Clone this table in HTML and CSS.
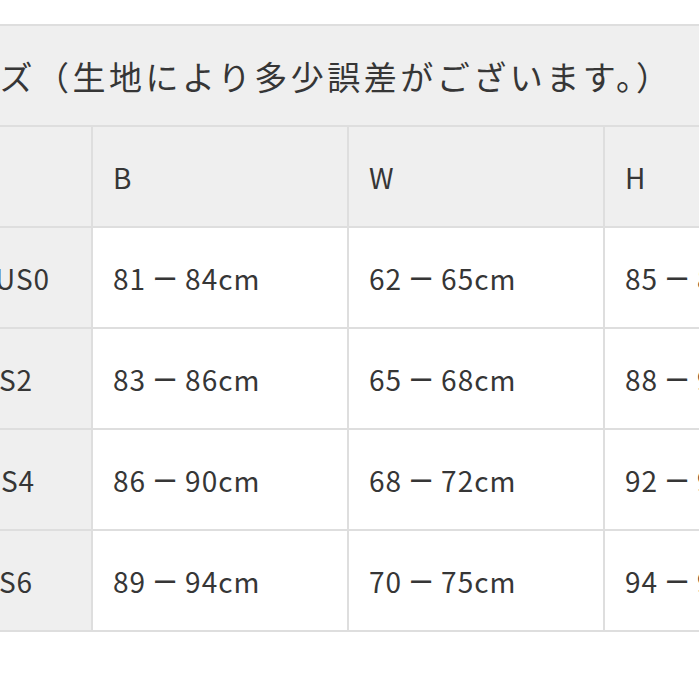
FILE: index.html
```html
<!DOCTYPE html>
<html lang="ja">
<head>
<meta charset="utf-8">
<title>サイズ表</title>
<link rel="stylesheet" href="styles.css">
</head>
<body>
<div class="page">
  <table class="size-table">
    <colgroup>
      <col class="col">
      <col class="col">
      <col class="col">
      <col class="col">
    </colgroup>
    <thead>
      <tr>
        <th class="caption" colspan="4">ヌードサイズ（生地により多少誤差がございます。）</th>
      </tr>
      <tr class="head-row">
        <th></th>
        <th>B</th>
        <th>W</th>
        <th>H</th>
      </tr>
    </thead>
    <tbody>
      <tr>
        <th class="label">US0</th>
        <td>81<span class="dash">ー</span>84cm</td>
        <td>62<span class="dash">ー</span>65cm</td>
        <td>85<span class="dash">ー</span>88cm</td>
      </tr>
      <tr>
        <th class="label label-narrow">US2</th>
        <td>83<span class="dash">ー</span>86cm</td>
        <td>65<span class="dash">ー</span>68cm</td>
        <td>88<span class="dash">ー</span>91cm</td>
      </tr>
      <tr>
        <th class="label label-mid">US4</th>
        <td>86<span class="dash">ー</span>90cm</td>
        <td>68<span class="dash">ー</span>72cm</td>
        <td>92<span class="dash">ー</span>95cm</td>
      </tr>
      <tr>
        <th class="label label-narrow">US6</th>
        <td>89<span class="dash">ー</span>94cm</td>
        <td>70<span class="dash">ー</span>75cm</td>
        <td>94<span class="dash">ー</span>98cm</td>
      </tr>
    </tbody>
  </table>
</div>
</body>
</html>
```

FILE: styles.css
```css
html, body {
  margin: 0;
  padding: 0;
  background: #ffffff;
  overflow: hidden;
}

.page {
  padding-top: 24px;
  width: 699px;
  height: 699px;
  overflow: hidden;
}

.size-table {
  border-collapse: collapse;
  table-layout: fixed;
  margin-left: -165px;
  width: 1026px;
  font-family: "Noto Sans CJK JP", "Noto Sans", sans-serif;
  color: #363636;
}

.col {
  width: 256px;
}

.size-table th,
.size-table td {
  border: 2px solid #dedede;
  height: 101px;
  padding: 0 0 0 20px;
  box-sizing: border-box;
  text-align: left;
  vertical-align: middle;
  font-size: 28px;
  font-weight: 400;
  letter-spacing: 1px;
  white-space: nowrap;
  overflow: hidden;
}

.size-table td {
  background: #ffffff;
}

.size-table th {
  background: #efefef;
}

.size-table .label {
  padding-left: 158px;
}

.size-table .label-narrow {
  padding-left: 141px;
}

.size-table .label-mid {
  padding-left: 143px;
}

.dash {
  display: inline-block;
  margin: 0 5px;
  transform: scaleX(0.9);
}

.size-table .caption {
  font-size: 33px;
  font-weight: 400;
  letter-spacing: 3.5px;
  padding-left: 0;
  text-indent: -19px;
  overflow: visible;
}
```
